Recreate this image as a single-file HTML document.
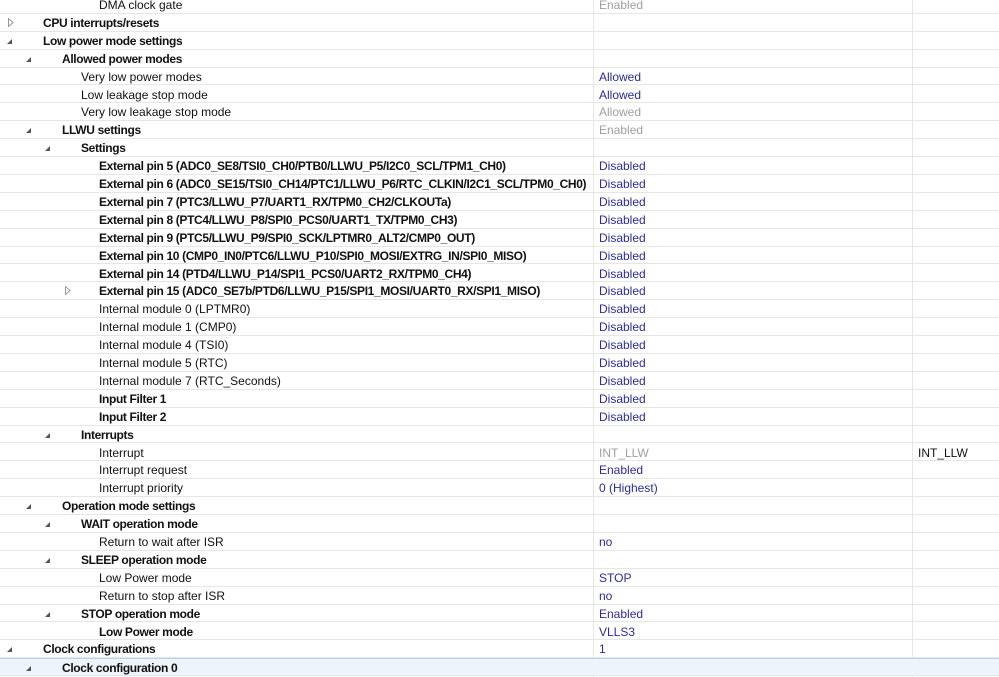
<!DOCTYPE html>
<html><head><meta charset="utf-8"><style>
body{margin:0;width:999px;height:677px;overflow:hidden;background:#fff;font-family:"Liberation Sans",sans-serif;font-size:12px;position:relative}
.r{position:absolute;left:0;width:999px;height:17.9px;box-sizing:border-box;border-bottom:1px solid #e6e6e6}
.r span{position:absolute;top:1px;line-height:16px;white-space:nowrap;color:#111}
.r .b{font-weight:bold;letter-spacing:-0.35px}
.r .v{left:599px;color:#2b2b9e}
.r .g{color:#a0a0a0}
.r .c3{left:918px}
.vl{position:absolute;top:0;width:1px;height:677px;background:#e6e6e6}
.tri{position:absolute;top:7px;width:0;height:0;border-left:5px solid transparent;border-bottom:5px solid #555}
.op{position:absolute;top:4px}
</style></head><body>
<div class="vl" style="left:593px"></div>
<div class="vl" style="left:912px"></div>
<div id="c"></div>
<script>
var rows=[
[3,0,0,"DMA clock gate","Enabled",1],
[0,1,2,"CPU interrupts/resets"],
[0,1,1,"Low power mode settings"],
[1,1,1,"Allowed power modes"],
[2,0,0,"Very low power modes","Allowed"],
[2,0,0,"Low leakage stop mode","Allowed"],
[2,0,0,"Very low leakage stop mode","Allowed",1],
[1,1,1,"LLWU settings","Enabled",1],
[2,1,1,"Settings"],
[3,1,0,"External pin 5 (ADC0_SE8/TSI0_CH0/PTB0/LLWU_P5/I2C0_SCL/TPM1_CH0)","Disabled"],
[3,1,0,"External pin 6 (ADC0_SE15/TSI0_CH14/PTC1/LLWU_P6/RTC_CLKIN/I2C1_SCL/TPM0_CH0)","Disabled"],
[3,1,0,"External pin 7 (PTC3/LLWU_P7/UART1_RX/TPM0_CH2/CLKOUTa)","Disabled"],
[3,1,0,"External pin 8 (PTC4/LLWU_P8/SPI0_PCS0/UART1_TX/TPM0_CH3)","Disabled"],
[3,1,0,"External pin 9 (PTC5/LLWU_P9/SPI0_SCK/LPTMR0_ALT2/CMP0_OUT)","Disabled"],
[3,1,0,"External pin 10 (CMP0_IN0/PTC6/LLWU_P10/SPI0_MOSI/EXTRG_IN/SPI0_MISO)","Disabled"],
[3,1,0,"External pin 14 (PTD4/LLWU_P14/SPI1_PCS0/UART2_RX/TPM0_CH4)","Disabled"],
[3,1,2,"External pin 15 (ADC0_SE7b/PTD6/LLWU_P15/SPI1_MOSI/UART0_RX/SPI1_MISO)","Disabled"],
[3,0,0,"Internal module 0 (LPTMR0)","Disabled"],
[3,0,0,"Internal module 1 (CMP0)","Disabled"],
[3,0,0,"Internal module 4 (TSI0)","Disabled"],
[3,0,0,"Internal module 5 (RTC)","Disabled"],
[3,0,0,"Internal module 7 (RTC_Seconds)","Disabled"],
[3,1,0,"Input Filter 1","Disabled"],
[3,1,0,"Input Filter 2","Disabled"],
[2,1,1,"Interrupts"],
[3,0,0,"Interrupt","INT_LLW",1,"INT_LLW"],
[3,0,0,"Interrupt request","Enabled"],
[3,0,0,"Interrupt priority","0 (Highest)"],
[1,1,1,"Operation mode settings"],
[2,1,1,"WAIT operation mode"],
[3,0,0,"Return to wait after ISR","no"],
[2,1,1,"SLEEP operation mode"],
[3,0,0,"Low Power mode","STOP"],
[3,0,0,"Return to stop after ISR","no"],
[2,1,1,"STOP operation mode","Enabled"],
[3,1,0,"Low Power mode","VLLS3"],
[0,1,1,"Clock configurations","1"],
[1,1,1,"Clock configuration 0"]
];
var tx=[43,62,81,99],ax=[7,26,45,64],h="";
rows.forEach(function(r,i){
var top=(-4+17.9*i).toFixed(1);
var st="top:"+top+"px";
if(i==37)st+=";background:#eef4fc;border-top:1px solid #b9d3ee";
h+='<div class="r" style="'+st+'">';
if(r[2]==1)h+='<div class="tri" style="left:'+ax[r[0]]+'px"></div>';
if(r[2]==2)h+='<svg class="op" style="left:'+(ax[r[0]]+1)+'px" width="6" height="9"><path d="M0.5 0.5L5 4.5L0.5 8.5Z" fill="none" stroke="#999"/></svg>';
h+='<span class="'+(r[1]?'b':'')+'" style="left:'+tx[r[0]]+'px">'+r[3]+'</span>';
if(r[4])h+='<span class="v'+(r[5]?' g':'')+'">'+r[4]+'</span>';
if(r[6])h+='<span class="c3">'+r[6]+'</span>';
h+='</div>';});
document.getElementById("c").innerHTML=h;
</script>
</body></html>
